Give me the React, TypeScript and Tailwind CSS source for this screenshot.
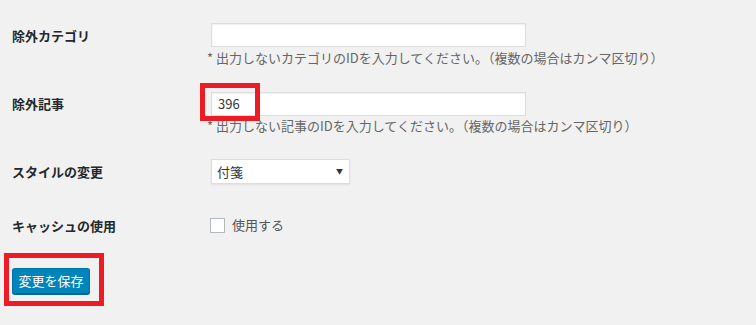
import React from "react";

const font = { fontFamily: '"Noto Sans CJK JP", "Noto Sans", sans-serif' };

export default function App() {
  return (
    <div
      className="w-[756px] h-[325px] bg-[#f1f1f1] text-[#23282d] overflow-hidden pt-[23px]"
      style={font}
    >
      {/* Row 1 */}
      <div className="flex items-center h-[24px]">
        <div className="w-[211px] pl-[12px] text-[13px] font-bold leading-none">除外カテゴリ</div>
        <input
          type="text"
          className="w-[315px] h-[24px] bg-white border border-[#dddddd] shadow-[inset_0_1px_2px_rgba(0,0,0,0.07)] outline-none px-[6px] text-[13px]"
        />
      </div>
      <p className="ml-[207px] mt-[3px] text-[13px] leading-[16px] text-[#666666]">
        * 出力しないカテゴリのIDを入力してください。（複数の場合はカンマ区切り）
      </p>

      {/* Row 2 */}
      <div className="flex items-center h-[24px] mt-[25px]">
        <div className="w-[211px] pl-[12px] text-[13px] font-bold leading-none">除外記事</div>
        <div className="relative">
          <input
            type="text"
            defaultValue="396"
            className="w-[315px] h-[24px] bg-white border border-[#dddddd] shadow-[inset_0_1px_2px_rgba(0,0,0,0.07)] outline-none px-[6px] text-[13px] text-[#32373c]"
          />
          <div className="absolute left-[-11px] top-[-7px] w-[60px] h-[38px] border-[5px] border-[#ed1c24] pointer-events-none" />
        </div>
      </div>
      <p className="ml-[207px] mt-[3px] text-[13px] leading-[16px] text-[#666666]">
        * 出力しない記事のIDを入力してください。（複数の場合はカンマ区切り）
      </p>

      {/* Row 3 */}
      <div className="flex items-center h-[25px] mt-[25px]">
        <div className="w-[211px] pl-[12px] text-[13px] font-bold leading-none">スタイルの変更</div>
        <div className="w-[139px] h-[25px] bg-white border border-[#dddddd] shadow-[0_1px_2px_rgba(0,0,0,0.07)] flex items-center justify-between pl-[5px] pr-[6px] text-[13px] text-[#32373c]">
          <span>付箋</span>
          <span className="text-[7px] text-[#32373c]">▼</span>
        </div>
      </div>

      {/* Row 4 */}
      <div className="flex items-center h-[16px] mt-[33px]">
        <div className="w-[210px] pl-[12px] text-[13px] font-bold leading-none">キャッシュの使用</div>
        <div className="w-[15px] h-[15px] bg-white border border-[#b4b9be]" />
        <span className="ml-[7px] text-[13px] text-[#555555]">使用する</span>
      </div>

      {/* Button */}
      <div className="mt-[34px] pl-[12px]">
        <div className="relative inline-block">
          <button
            className="w-[78px] h-[26px] rounded-[3px] bg-[#0085ba] border border-[#0073aa] border-b-[#006799] shadow-[0_1px_0_#006799] text-white text-[13px] leading-none"
          >
            変更を保存
          </button>
          <div className="absolute left-[-8px] top-[-14px] w-[100px] h-[53px] border-[5px] border-[#ed1c24] pointer-events-none" />
        </div>
      </div>
    </div>
  );
}
